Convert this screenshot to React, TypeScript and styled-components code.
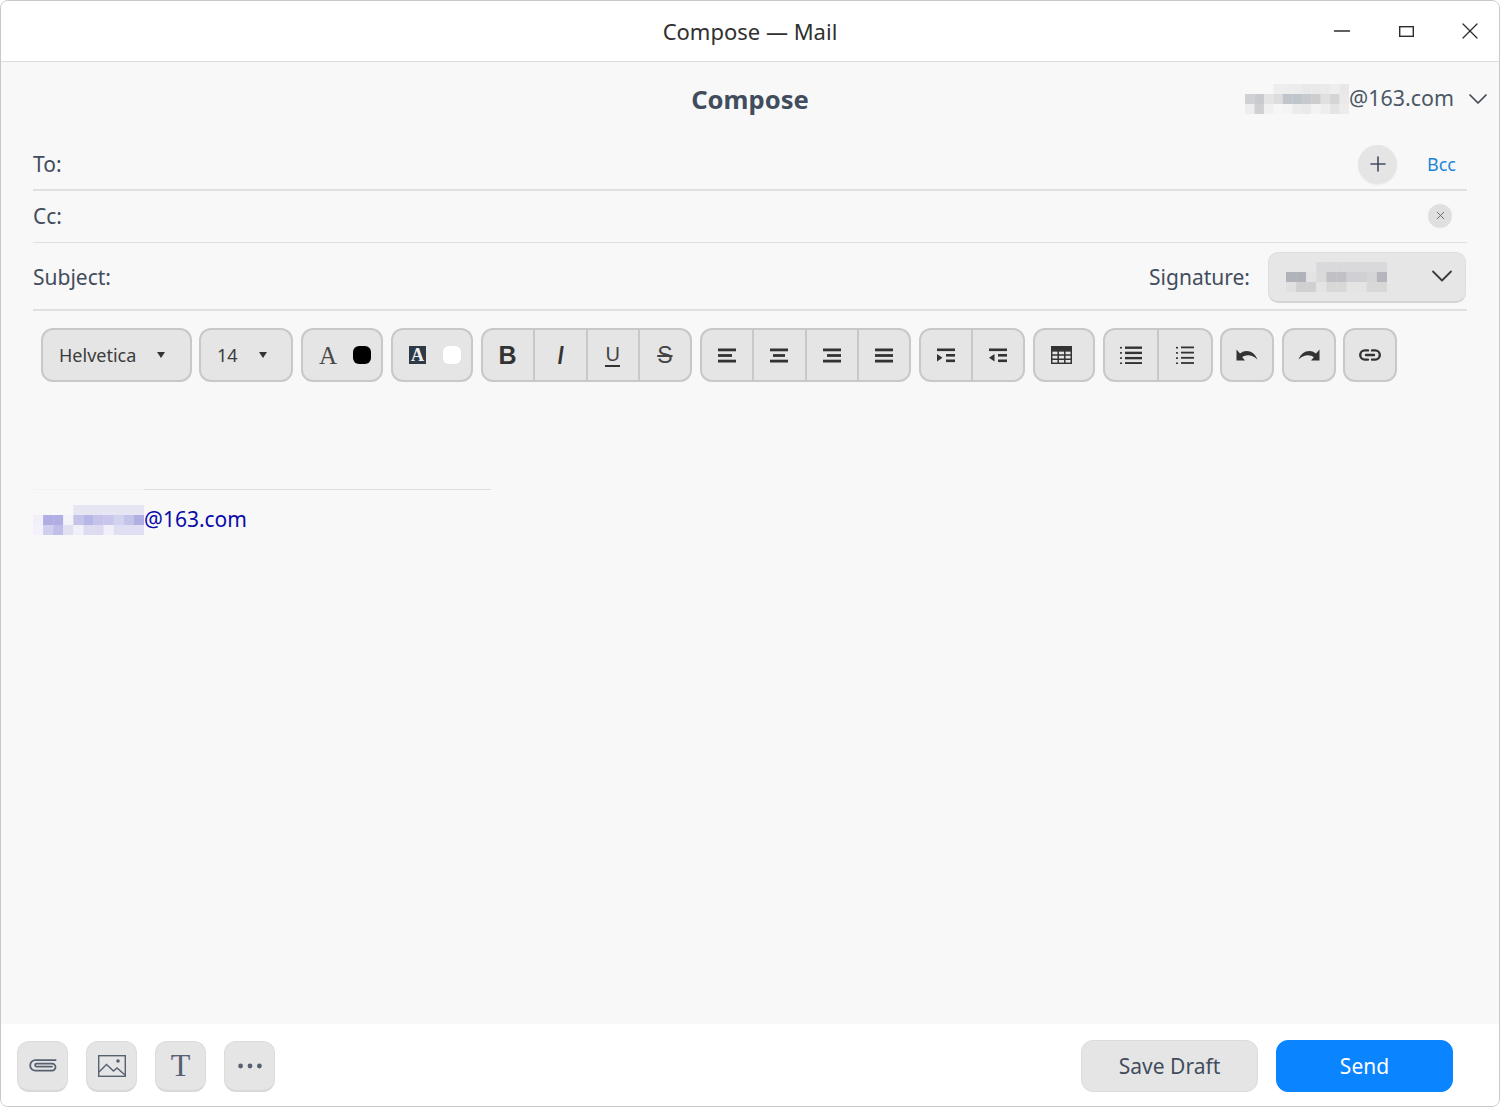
import React from 'react';
import styled, { createGlobalStyle } from 'styled-components';
import { ChevronDown, Minus, Plus, X } from 'lucide-react';

const GlobalStyle = createGlobalStyle`
  html, body {
    margin: 0;
    padding: 0;
    background: #ffffff;
  }
  * {
    box-sizing: border-box;
  }
`;

const Window = styled.div`
  width: 1500px;
  height: 1107px;
  display: flex;
  flex-direction: column;
  border: 1px solid #c8c8c8;
  border-radius: 8px;
  overflow: hidden;
  background: #f8f8f8;
  font-family: 'Noto Sans', sans-serif;
  color: #414d5c;
`;

const TitleBar = styled.header`
  position: relative;
  height: 61px;
  flex: none;
  display: flex;
  align-items: center;
  justify-content: center;
  background: #ffffff;
  border-bottom: 1px solid #dcdcdc;
  font-size: 22px;
  color: #303030;
`;

const WindowControls = styled.div`
  position: absolute;
  top: 0;
  right: -3px;
  height: 60px;
  display: flex;
  align-items: center;
  color: #2c2c2c;
`;

const WindowButton = styled.span`
  width: 64px;
  height: 60px;
  display: flex;
  align-items: center;
  justify-content: center;
`;

const Main = styled.main`
  flex: 1;
  display: flex;
  flex-direction: column;
  padding: 0 32px;
  min-height: 0;
`;

const HeadRow = styled.div`
  position: relative;
  height: 77px;
  padding-bottom: 2px;
  display: flex;
  align-items: center;
  justify-content: center;
`;

const Heading = styled.h1`
  margin: 0;
  font-size: 25.6px;
  font-weight: 700;
  color: #414d5c;
`;

const Account = styled.div`
  position: absolute;
  right: -27px;
  top: 19px;
  height: 32px;
  display: flex;
  align-items: center;
  font-size: 21.4px;
  color: #4c5866;
`;

const AccountChevron = styled(ChevronDown)`
  margin: 4px 0 0 8px;
  color: #3f4a57;
`;

const MosaicSlot = styled.span<{ $top: number }>`
  flex: none;
  margin-top: ${(p) => p.$top}px;
`;

const FieldRow = styled.div<{ $height: number; $line: number; $padTop?: number; $padBottom?: number }>`
  height: ${(p) => p.$height}px;
  padding: ${(p) => p.$padTop ?? 0}px 0 ${(p) => p.$padBottom ?? 0}px;
  display: flex;
  align-items: center;
  border-bottom: ${(p) => p.$line}px solid #e0e0e0;
`;

const FieldLabel = styled.label`
  flex: 1;
  font-size: 21px;
  color: #414d5c;
`;

const RoundAdd = styled.span`
  width: 39px;
  height: 39px;
  border-radius: 50%;
  display: flex;
  align-items: center;
  justify-content: center;
  background: #e5e5e5;
  color: #414d5c;
  box-shadow: 0 1px 2px rgba(0, 0, 0, 0.06);
`;

const BccLink = styled.a`
  width: 70px;
  padding-left: 30px;
  font-size: 18px;
  color: #1a85d8;
`;

const RoundClose = styled.span`
  width: 24px;
  height: 24px;
  margin-right: 15px;
  border-radius: 50%;
  display: flex;
  align-items: center;
  justify-content: center;
  background: #dfdfdf;
  color: #55606c;
`;

const SignatureLabel = styled.span`
  font-size: 21px;
  color: #414d5c;
  margin-right: 18px;
`;

const SignatureSelect = styled.div`
  width: 198px;
  height: 51px;
  margin: 0 1px 0 0;
  padding: 0 5px 0 17px;
  display: flex;
  align-items: center;
  justify-content: space-between;
  background: #e6e6e6;
  border: 1px solid #dddddd;
  border-bottom: 2px solid #d4d4d4;
  border-radius: 10px;
  color: #3a3a3a;
`;

const SignatureChevron = styled(ChevronDown)`
  margin-bottom: 1px;
`;

const Toolbar = styled.div`
  padding: 17px 0 0 8px;
  display: flex;
  gap: 8px;
`;

const ToolGroup = styled.div<{ $width: number; $tight?: boolean }>`
  width: ${(p) => p.$width}px;
  height: 54px;
  margin-left: ${(p) => (p.$tight ? -1 : 0)}px;
  display: flex;
  flex: none;
  background: #e5e5e5;
  border: 2px solid #c8c8c8;
  border-radius: 12px;
  overflow: hidden;
  color: #333333;
`;

const ToolCell = styled.span`
  flex: 1;
  display: flex;
  align-items: center;
  justify-content: center;
  & + & {
    border-left: 2px solid #c8c8c8;
  }
`;

const DropCell = styled.span<{ $gap: number }>`
  flex: 1;
  display: flex;
  align-items: center;
  padding: 0 0 1px 16px;
  gap: ${(p) => p.$gap}px;
  font-size: 18px;
  color: #3c3c3c;
`;

const Caret = styled.i`
  width: 0;
  height: 0;
  border-left: 4.5px solid transparent;
  border-right: 4.5px solid transparent;
  border-top: 6px solid #333333;
`;

const SerifA = styled.span`
  font-family: 'Liberation Serif', serif;
  font-size: 25px;
  line-height: 25px;
  color: #4a4a4a;
`;

const Swatch = styled.i<{ $color: string }>`
  width: 18px;
  height: 18px;
  border-radius: 6px;
  background: ${(p) => p.$color};
`;

const ColorCell = styled.span<{ $gap: number }>`
  flex: 1;
  display: flex;
  align-items: center;
  justify-content: center;
  padding-left: 6px;
  gap: ${(p) => p.$gap}px;
`;

const InvertedA = styled.span`
  width: 17px;
  height: 18px;
  display: flex;
  align-items: center;
  justify-content: center;
  background: #2e3a46;
  color: #f0f0f0;
  font-family: 'Liberation Serif', serif;
  font-size: 18px;
  font-weight: 700;
  line-height: 18px;
`;

const GlyphB = styled.span`
  margin-right: 1px;
  font-family: 'Liberation Sans', sans-serif;
  font-size: 25px;
  font-weight: 700;
`;

const GlyphI = styled.span`
  font-family: 'Liberation Sans', sans-serif;
  font-size: 25px;
  font-weight: 700;
  font-style: italic;
  transform: scaleX(0.8);
`;

const GlyphU = styled.span`
  font-family: 'Liberation Sans', sans-serif;
  font-size: 20px;
  line-height: 22px;
  border-bottom: 2px solid #333333;
  color: #444444;
`;

const GlyphS = styled.span`
  font-family: 'Liberation Sans', sans-serif;
  font-size: 23px;
  text-decoration: line-through;
  text-decoration-thickness: 2px;
  color: #444444;
`;

const TableSlot = styled.span`
  display: flex;
  margin-right: 5px;
`;

const Editor = styled.div`
  flex: 1;
  padding-top: 107px;
`;

const SignatureRule = styled.div`
  width: 458px;
  height: 1px;
  background: linear-gradient(to right, #f3f3f3 111px, #dcdcdc 111px);
`;

const SignatureMail = styled.div`
  margin-top: 14px;
  display: flex;
  align-items: center;
  height: 30px;
  font-size: 21px;
  color: #0a0aa8;
`;

const Footer = styled.footer`
  height: 82px;
  flex: none;
  display: flex;
  align-items: center;
  justify-content: space-between;
  padding: 2px 46px 0 16px;
  background: #ffffff;
`;

const FooterTools = styled.div`
  display: flex;
  gap: 18px;
`;

const FooterTool = styled.span`
  width: 51px;
  height: 51px;
  display: flex;
  align-items: center;
  justify-content: center;
  background: #e5e5e5;
  border: 1px solid #dcdcdc;
  border-bottom: 2px solid #d8d8d8;
  border-radius: 12px;
  color: #4f5b6a;
`;

const SerifT = styled.span`
  font-family: 'Liberation Serif', serif;
  font-size: 32px;
  color: #566172;
`;

const FooterActions = styled.div`
  display: flex;
  gap: 18px;
`;

const ActionButton = styled.button<{ $primary?: boolean }>`
  width: 177px;
  height: 52px;
  padding: 0;
  font-family: inherit;
  font-size: 21px;
  border-radius: 12px;
  border: 1px solid ${(p) => (p.$primary ? '#0a84ff' : '#dcdcdc')};
  background: ${(p) => (p.$primary ? '#0a84ff' : '#e5e5e5')};
  color: ${(p) => (p.$primary ? '#ffffff' : '#414d5c')};
`;

/* redacted address, drawn as the mosaic it is in the picture */
function Mosaic({ cells, width, height }: { cells: string[][]; width: number; height: number }) {
  const w = width / cells[0].length;
  const h = height / cells.length;
  return (
    <svg width={width} height={height} style={{ display: 'block' }}>
      {cells.map((row, y) =>
        row.map((fill, x) => <rect key={`${x}-${y}`} x={x * w} y={y * h} width={w + 0.2} height={h + 0.2} fill={fill} />),
      )}
    </svg>
  );
}

const accountCells = [
  ['#f8f8f8', '#f8f8f8', '#f8f8f8', '#eeeeee', '#ededed', '#ececec', '#e9e9e9', '#e9e9e9', '#eaeaea', '#eeeeee', '#e8e8e8'],
  ['#cfd1d4', '#c8cacd', '#e4e4e4', '#dddddd', '#c0c4cb', '#c0c4cb', '#c6c9cd', '#cdcdcd', '#e0e0e0', '#d5d5d5', '#eaeaea'],
  ['#eeeeee', '#cfd0d2', '#f0f0f0', '#f6f6f6', '#f4f4f4', '#ececec', '#eaeaea', '#f3f3f3', '#eeeeee', '#e4e4e4', '#ececec'],
];

const signatureCells = [
  ['#e6e6e6', '#e6e6e6', '#e6e6e6', '#d9d9dc', '#d9d9dc', '#d9d9dc', '#d9d9dc', '#d9d9dc', '#d9d9dc', '#d9d9dc'],
  ['#b1b3ba', '#b1b3ba', '#e3e3e3', '#dadada', '#c0c0c5', '#c0c0c5', '#d0d0d4', '#d0d0d4', '#d5d5d8', '#b5b5bb'],
  ['#e0e0e0', '#d0d0d0', '#d0d0d0', '#e4e4e4', '#d8d8d8', '#d8d8d8', '#e4e4e4', '#e4e4e4', '#d8d8d8', '#d8d8d8'],
];

const mailCells = [
  ['#f8f8f8', '#f8f8f8', '#f8f8f8', '#f8f8f8', '#e6e5f3', '#e6e5f3', '#e6e5f3', '#e6e5f3', '#e6e5f3', '#e6e5f3', '#e6e5f3'],
  ['#f0effa', '#b0aee3', '#b0aee3', '#f4f4f8', '#c5c3ea', '#b8b6e6', '#c5c3ea', '#c8c6eb', '#d4d3ef', '#c4c3ea', '#b0aee3'],
  ['#f3f2fb', '#d0cfee', '#c0bfe9', '#e0e0f0', '#f0f0f8', '#dcdbf2', '#dcdbf2', '#f0effa', '#dfdef2', '#dfdef2', '#dfdef2'],
];

function MaximizeIcon() {
  return (
    <svg width="15" height="11" viewBox="0 0 15 11" fill="none" stroke="#2c2c2c" strokeWidth="1.4">
      <rect x="0.7" y="0.7" width="13.6" height="9.6" />
    </svg>
  );
}

function Bars({ rows }: { rows: [number, number][] }) {
  return (
    <svg width="18" height="15" viewBox="0 0 18 15">
      {rows.map(([x, w], i) => (
        <rect key={i} x={x} y={0.5 + i * 5.6} width={w} height="2.8" fill="#333333" />
      ))}
    </svg>
  );
}

function IndentIcon({ outdent }: { outdent?: boolean }) {
  return (
    <svg width="18" height="15" viewBox="0 0 18 15" fill="#333333">
      <rect x="0" y="0.5" width="18" height="2.6" />
      <rect x="9" y="6" width="9" height="2.6" />
      <rect x="9" y="11.5" width="9" height="2.6" />
      <path d={outdent ? 'M5.5 6 L0 9.8 L5.5 13.6 Z' : 'M0 6 L5.5 9.8 L0 13.6 Z'} />
    </svg>
  );
}

function TableIcon() {
  return (
    <svg width="21" height="18" viewBox="0 0 21 18" fill="none" stroke="#333333" strokeWidth="1.5">
      <rect x="0.7" y="0.7" width="19.6" height="16.6" />
      <rect x="0.7" y="0.7" width="19.6" height="4.2" fill="#333333" />
      <path d="M0.7 9H20.3M0.7 13.2H20.3M7.2 5V17.3M13.8 5V17.3" />
    </svg>
  );
}

function ListIcon({ width, thick }: { width: number; thick: number }) {
  return (
    <svg width={width} height="18" viewBox={`0 0 ${width} 18`} fill="#333333">
      {[0, 1, 2, 3].map((i) => (
        <g key={i}>
          <rect x="0" y={0.9 + i * 5.2} width="2" height="1.6" />
          <rect x="5" y={0.5 + i * 5.2} width={width - 5} height={thick} />
        </g>
      ))}
    </svg>
  );
}

function UndoIcon({ flip }: { flip?: boolean }) {
  return (
    <svg width="22" height="12" viewBox="0 0 22 12" style={flip ? { transform: 'scaleX(-1)' } : undefined}>
      <path d="M0.5 0.5 V11.5 H9 L6.2 8.2 C10 5.6 15.6 5.2 21.5 10.6 C18.6 3 10.6 -0.8 4 4.6 Z" fill="#333333" />
    </svg>
  );
}

function LinkIcon() {
  return (
    <svg width="22" height="12" viewBox="0 0 22 12" fill="none" stroke="#333333" strokeWidth="2.4" strokeLinecap="round">
      <path d="M9 1.4H5.8a4.6 4.6 0 0 0 0 9.2H9" />
      <path d="M13 1.4h3.2a4.6 4.6 0 0 1 0 9.2H13" />
      <path d="M7 6h8" />
    </svg>
  );
}

function ClipIcon() {
  return (
    <svg width="28" height="13" viewBox="0 0 28 13" fill="none" stroke="#566172" strokeWidth="1.8" strokeLinecap="round">
      <path d="M26.6 1.2H6.4a5.1 5.1 0 0 0 0 10.4H23a3.5 3.5 0 0 0 0-7H7.6a1.5 1.5 0 0 0 0 3H23" />
    </svg>
  );
}

function ImageIcon() {
  return (
    <svg width="28" height="22" viewBox="0 0 28 22" fill="none" stroke="#566172" strokeWidth="1.4">
      <rect x="0.7" y="0.7" width="26.6" height="20.6" />
      <path d="M1 17L8.5 9.5L15.5 16L19 13L27 20" />
      <circle cx="20" cy="6" r="1.8" fill="#566172" stroke="none" />
    </svg>
  );
}

function DotsIcon() {
  return (
    <svg width="24" height="6" viewBox="0 0 24 6" fill="#566172">
      <circle cx="2.6" cy="3" r="2.4" />
      <circle cx="12" cy="3" r="2.4" />
      <circle cx="21.4" cy="3" r="2.4" />
    </svg>
  );
}

export default function App() {
  return (
    <>
      <GlobalStyle />
      <Window>
        <TitleBar>
          Compose — Mail
          <WindowControls>
            <WindowButton>
              <Minus size={26} strokeWidth={1.2} />
            </WindowButton>
            <WindowButton>
              <MaximizeIcon />
            </WindowButton>
            <WindowButton>
              <X size={28} strokeWidth={1.1} />
            </WindowButton>
          </WindowControls>
        </TitleBar>
        <Main>
          <HeadRow>
            <Heading>Compose</Heading>
            <Account>
              <MosaicSlot $top={4}>
                <Mosaic cells={accountCells} width={104} height={30} />
              </MosaicSlot>
              @163.com
              <AccountChevron size={32} strokeWidth={1.3} />
            </Account>
          </HeadRow>
          <FieldRow $height={52} $line={2}>
            <FieldLabel>To:</FieldLabel>
            <RoundAdd>
              <Plus size={24} strokeWidth={1.6} />
            </RoundAdd>
            <BccLink>Bcc</BccLink>
          </FieldRow>
          <FieldRow $height={52} $line={1} $padBottom={2}>
            <FieldLabel>Cc:</FieldLabel>
            <RoundClose>
              <X size={13} strokeWidth={1.6} />
            </RoundClose>
          </FieldRow>
          <FieldRow $height={68} $line={2} $padTop={2}>
            <FieldLabel>Subject:</FieldLabel>
            <SignatureLabel>Signature:</SignatureLabel>
            <SignatureSelect>
              <Mosaic cells={signatureCells} width={101} height={30} />
              <SignatureChevron size={36} strokeWidth={1.2} />
            </SignatureSelect>
          </FieldRow>
          <Toolbar>
            <ToolGroup $width={151}>
              <DropCell $gap={21}>
                Helvetica
                <Caret />
              </DropCell>
            </ToolGroup>
            <ToolGroup $width={94} $tight>
              <DropCell $gap={21}>
                14
                <Caret />
              </DropCell>
            </ToolGroup>
            <ToolGroup $width={82}>
              <ColorCell $gap={16}>
                <SerifA>A</SerifA>
                <Swatch $color="#000000" />
              </ColorCell>
            </ToolGroup>
            <ToolGroup $width={82}>
              <ColorCell $gap={17}>
                <InvertedA>A</InvertedA>
                <Swatch $color="#ffffff" />
              </ColorCell>
            </ToolGroup>
            <ToolGroup $width={211}>
              <ToolCell>
                <GlyphB>B</GlyphB>
              </ToolCell>
              <ToolCell>
                <GlyphI>I</GlyphI>
              </ToolCell>
              <ToolCell>
                <GlyphU>U</GlyphU>
              </ToolCell>
              <ToolCell>
                <GlyphS>S</GlyphS>
              </ToolCell>
            </ToolGroup>
            <ToolGroup $width={211}>
              <ToolCell>
                <Bars rows={[[0, 18], [0, 14], [0, 18]]} />
              </ToolCell>
              <ToolCell>
                <Bars rows={[[0, 18], [3, 12], [0, 18]]} />
              </ToolCell>
              <ToolCell>
                <Bars rows={[[0, 18], [4, 14], [0, 18]]} />
              </ToolCell>
              <ToolCell>
                <Bars rows={[[0, 18], [0, 18], [0, 18]]} />
              </ToolCell>
            </ToolGroup>
            <ToolGroup $width={106}>
              <ToolCell>
                <IndentIcon />
              </ToolCell>
              <ToolCell>
                <IndentIcon outdent />
              </ToolCell>
            </ToolGroup>
            <ToolGroup $width={62}>
              <ToolCell>
                <TableSlot>
                  <TableIcon />
                </TableSlot>
              </ToolCell>
            </ToolGroup>
            <ToolGroup $width={110}>
              <ToolCell>
                <ListIcon width={22} thick={2.4} />
              </ToolCell>
              <ToolCell>
                <ListIcon width={18} thick={1.8} />
              </ToolCell>
            </ToolGroup>
            <ToolGroup $width={54} $tight>
              <ToolCell>
                <UndoIcon />
              </ToolCell>
            </ToolGroup>
            <ToolGroup $width={54}>
              <ToolCell>
                <UndoIcon flip />
              </ToolCell>
            </ToolGroup>
            <ToolGroup $width={54} $tight>
              <ToolCell>
                <LinkIcon />
              </ToolCell>
            </ToolGroup>
          </Toolbar>
          <Editor>
            <SignatureRule />
            <SignatureMail>
              <MosaicSlot $top={2}>
                <Mosaic cells={mailCells} width={111} height={30} />
              </MosaicSlot>
              @163.com
            </SignatureMail>
          </Editor>
        </Main>
        <Footer>
          <FooterTools>
            <FooterTool>
              <ClipIcon />
            </FooterTool>
            <FooterTool>
              <ImageIcon />
            </FooterTool>
            <FooterTool>
              <SerifT>T</SerifT>
            </FooterTool>
            <FooterTool>
              <DotsIcon />
            </FooterTool>
          </FooterTools>
          <FooterActions>
            <ActionButton>Save Draft</ActionButton>
            <ActionButton $primary>Send</ActionButton>
          </FooterActions>
        </Footer>
      </Window>
    </>
  );
}
